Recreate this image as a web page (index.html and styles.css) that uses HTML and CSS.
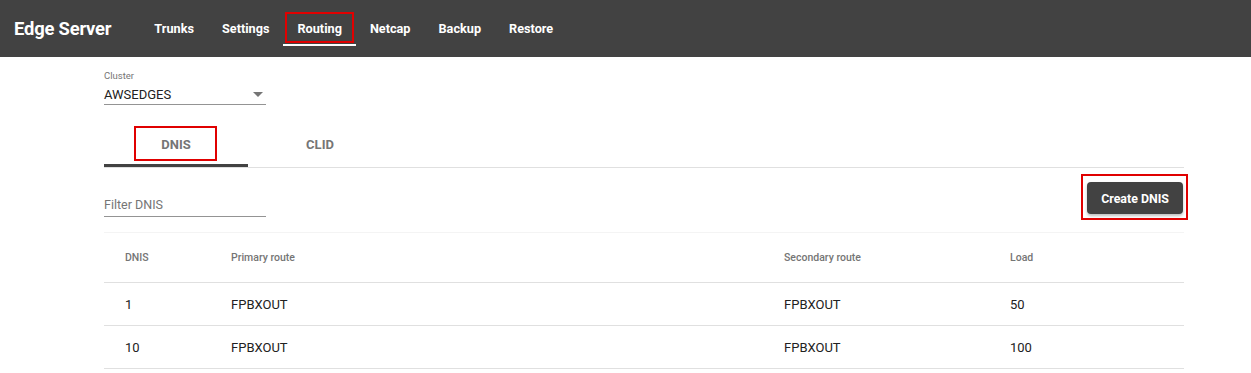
FILE: index.html
```html
<!DOCTYPE html>
<html lang="en">
<head>
  <meta charset="UTF-8" />
  <title>Edge Server – Routing</title>
  <link rel="stylesheet" href="styles.css">
</head>
<body>
  <!-- top bar -->
  <header class="topbar">
    <div class="brand">Edge Server</div>
    <nav class="nav">
      <a class="nav-link">Trunks</a>
      <a class="nav-link">Settings</a>
      <a class="nav-link active marked">Routing</a>
      <a class="nav-link">Netcap</a>
      <a class="nav-link">Backup</a>
      <a class="nav-link">Restore</a>
    </nav>
  </header>

  <main class="content">
    <!-- cluster select -->
    <div class="select-field">
      <div class="field-label">Cluster</div>
      <div class="select-value">
        <span>AWSEDGES</span>
        <svg class="caret" width="10" height="5" viewBox="0 0 10 5"><path d="M0 0h10L5 5z" fill="#757575"/></svg>
      </div>
    </div>

    <!-- tabs -->
    <div class="tabs">
      <div class="tab active marked">DNIS</div>
      <div class="tab">CLID</div>
    </div>

    <!-- toolbar -->
    <div class="toolbar">
      <div class="filter-field">Filter DNIS</div>
      <button class="btn-create marked">Create DNIS</button>
    </div>

    <!-- table -->
    <table class="dnis-table">
      <colgroup>
        <col style="width:127px">
        <col style="width:553px">
        <col style="width:226px">
        <col>
      </colgroup>
      <thead>
        <tr><th>DNIS</th><th>Primary route</th><th>Secondary route</th><th>Load</th></tr>
      </thead>
      <tbody>
        <tr><td>1</td><td>FPBXOUT</td><td>FPBXOUT</td><td>50</td></tr>
        <tr><td>10</td><td>FPBXOUT</td><td>FPBXOUT</td><td>100</td></tr>
      </tbody>
    </table>
  </main>
</body>
</html>
```

FILE: styles.css
```css
/* page */
body {
  margin: 0;
  font-family: Roboto, "Liberation Sans", Arial, sans-serif;
  background: #ffffff;
  color: #212121;
}

/* top bar */
.topbar {
  height: 57px;
  background-color: #424242;
  display: flex;
  align-items: center;
  padding-left: 14px;
  color: #ffffff;
}
.brand {
  font-size: 18.4px;
  font-weight: 700;
  margin-right: 29px;
  letter-spacing: -0.2px;
}
.nav {
  display: flex;
  margin-top: 3px;
}
.nav-link {
  position: relative;
  font-size: 12.7px;
  font-weight: 700;
  line-height: 16px;
  padding: 7px 14px 7px;
  border-bottom: 2px solid transparent;
  cursor: pointer;
}
.nav-link.active {
  border-bottom-color: #ffffff;
}

/* red annotation boxes */
.marked::after {
  content: "";
  position: absolute;
  border: 2px solid #e00000;
  pointer-events: none;
}
.nav-link.marked::after {
  top: -2px;
  left: 2px;
  right: 2px;
  bottom: 1px;
}

/* content */
.content {
  margin-left: 104px;
  width: 1080px;
}

/* cluster select */
.select-field {
  width: 162px;
  padding-top: 13px;
}
.field-label {
  font-size: 9.5px;
  line-height: 12px;
  color: #757575;
}
.select-value {
  display: flex;
  justify-content: space-between;
  align-items: center;
  margin-top: 2px;
  height: 20px;
  font-size: 13px;
  border-bottom: 1px solid #949494;
}
.caret {
  margin-right: 3px;
}

/* tabs */
.tabs {
  display: flex;
  margin-top: 15px;
  border-bottom: 1px solid #e0e0e0;
}
.tab {
  position: relative;
  width: 144px;
  text-align: center;
  font-size: 13px;
  font-weight: 700;
  line-height: 16px;
  color: #757575;
  padding: 17px 0 11px;
  border-bottom: 3px solid transparent;
}
.tab.active {
  border-bottom-color: #424242;
}
.tab.marked::after {
  top: 6px;
  left: 30px;
  right: 31px;
  bottom: 3px;
}

/* toolbar */
.toolbar {
  display: flex;
  justify-content: space-between;
  align-items: flex-start;
  padding: 14px 1px 15px 0;
  border-bottom: 1px solid #f4f4f4;
}
.filter-field {
  width: 162px;
  margin-top: 14px;
  height: 20px;
  line-height: 18px;
  font-size: 12.5px;
  color: #757575;
  border-bottom: 1px solid #949494;
}
.btn-create {
  position: relative;
  height: 32px;
  padding: 0 14px;
  border: none;
  border-radius: 4px;
  background-color: #424242;
  color: #ffffff;
  font-family: inherit;
  font-size: 12.4px;
  font-weight: 700;
  box-shadow: 0 2px 3px rgba(0, 0, 0, 0.25);
}
.btn-create.marked::after {
  top: -8px;
  left: -6px;
  right: -5px;
  bottom: -6px;
}

/* table */
.dnis-table {
  width: 100%;
  border-collapse: collapse;
  table-layout: fixed;
}
.dnis-table th {
  height: 49px;
  text-align: left;
  font-size: 10.5px;
  font-weight: 500;
  color: #757575;
  border-bottom: 1px solid #e0e0e0;
  padding: 0;
}
.dnis-table td {
  height: 42px;
  font-size: 13px;
  color: #212121;
  border-bottom: 1px solid #e0e0e0;
  padding: 0;
}
.dnis-table th:first-child,
.dnis-table td:first-child {
  padding-left: 21px;
}
```
